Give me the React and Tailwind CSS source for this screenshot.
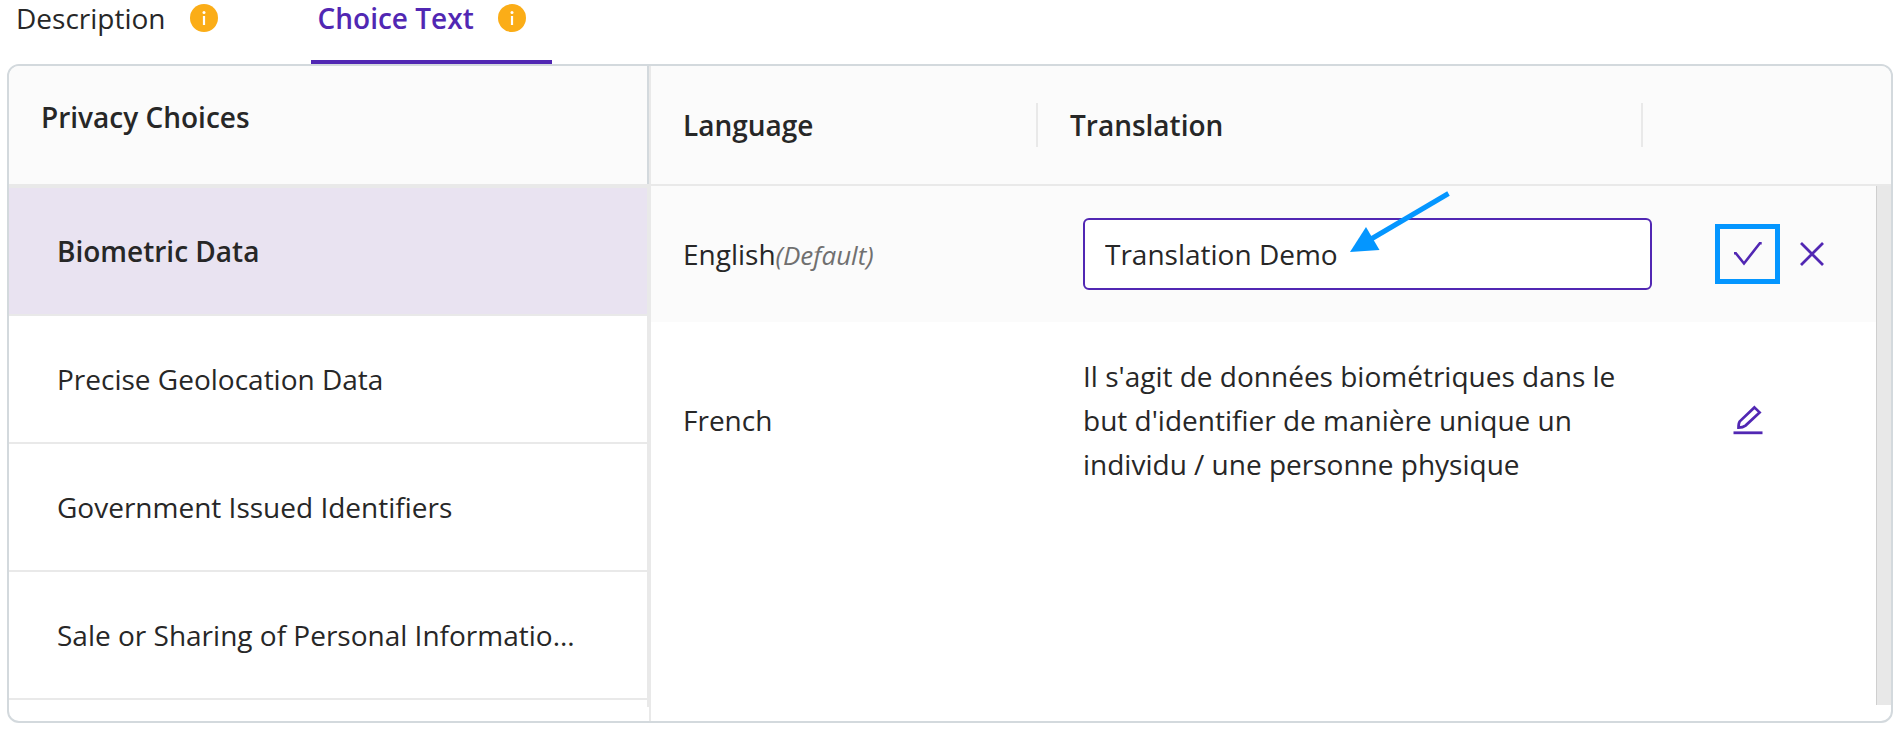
import { useState } from "react";
import clsx from "clsx";

const TABS = ["Description", "Choice Text"];

const CHOICES = [
  "Biometric Data",
  "Precise Geolocation Data",
  "Government Issued Identifiers",
  "Sale or Sharing of Personal Informatio...",
];

const InfoIcon = () => (
  <svg viewBox="0 0 28 28" className="h-7 w-7 shrink-0" aria-hidden="true">
    <circle cx="14" cy="14" r="14" fill="#fbad17" />
    <circle cx="14" cy="8.4" r="1.5" fill="#fff" />
    <path d="M14 12v9" stroke="#fff" strokeWidth="2.2" />
  </svg>
);

const CheckIcon = () => (
  <svg viewBox="0 0 30 26" className="h-[26px] w-[30px]" fill="none" stroke="#5127b3" strokeWidth="2.6" aria-hidden="true">
    <path d="M1 12.2h1.800l8.200 10.300L26.800 2.200h1.900" />
  </svg>
);

const CloseIcon = () => (
  <svg viewBox="0 0 24 24" className="h-6 w-6" fill="none" stroke="#5127b3" strokeWidth="2.8" aria-hidden="true">
    <path d="M1 1l22 22M23 1L1 23" />
  </svg>
);

const EditIcon = () => (
  <svg viewBox="0 0 30 30" className="h-[30px] w-[30px]" fill="none" stroke="#5127b3" strokeWidth="2.7" aria-hidden="true">
    <path d="M21.4 2.400l5.200 5L12.500 20.600c-1.800 1.400-4.200 2-7 2 0-2.800.2-4.900 1.300-6.300L21.400 2.400z" />
    <path d="M0.500 27.800h29" strokeWidth="2.800" />
  </svg>
);

const Arrow = () => (
  <svg viewBox="0 0 104 66" className="pointer-events-none absolute -top-[30px] left-[265px] h-[66px] w-[104px]" aria-hidden="true">
    <path d="M100.500 5.500L24 50.500" stroke="#0496ff" strokeWidth="5" />
    <path d="M2 64l16-25 13.500 23z" fill="#0496ff" />
  </svg>
);

const App = () => {
  const [tab, setTab] = useState("Choice Text");
  const [selected, setSelected] = useState("Biometric Data");
  const [value, setValue] = useState("Translation Demo");

  return (
    <div className="bg-white pr-[5px] pb-[7px] pl-[7px] font-['Open_Sans',sans-serif] text-[28px] leading-[44px] text-[#272727]">
      <div role="tablist" className="flex gap-[67px] pl-[2px]">
        {TABS.map((name) => (
          <button
            key={name}
            role="tab"
            aria-selected={tab === name}
            onClick={() => setTab(name)}
            className={clsx(
              "flex h-16 items-start gap-6 border-b-4 pr-[26px] pl-[7px] leading-9",
              tab === name ? "border-[#5127b3] font-semibold text-[#5127b3]" : "border-transparent"
            )}
          >
            {name}
            <span className="pt-1"><InfoIcon /></span>
          </button>
        ))}
      </div>

      <div className="grid grid-cols-[640px_1fr] overflow-hidden rounded-xl border-2 border-[#d3d9dd]">
        <aside>
          <h2 className="h-[118px] border-r-2 border-[#d3d9dd] bg-[#fbfbfb] pt-[29px] pl-8 font-semibold">
            Privacy Choices
          </h2>
          <ul className="border-t-4 border-r-2 border-[#e9e9e9] pb-[7px]">
            {CHOICES.map((choice) => (
              <li key={choice} className="border-b-2 border-[#e9e9e9]">
                <button
                  onClick={() => setSelected(choice)}
                  className={clsx(
                    "block h-[126px] w-full pl-12 text-left",
                    selected === choice && "bg-[#e9e3f1] font-semibold"
                  )}
                >
                  {choice}
                </button>
              </li>
            ))}
          </ul>
          <div className="h-[14px]" />
        </aside>

        <section className="relative border-l-2 border-[#e9e9e9]">
          <table className="w-full table-fixed border-separate border-spacing-0 text-left">
            <colgroup>
              <col className="w-[387px]" />
              <col />
              <col className="w-[239px]" />
            </colgroup>
            <thead className="bg-[#fbfbfb]">
              <tr className="h-[120px]">
                <th className="border-b-2 border-[#e9e9e9] pl-8 font-semibold">
                  <div className="border-r-2 border-[#e9e9e9]">Language</div>
                </th>
                <th className="border-b-2 border-[#e9e9e9] pr-[9px] pl-8 font-semibold">
                  <div className="border-r-2 border-[#e9e9e9]">Translation</div>
                </th>
                <td className="border-b-2 border-[#e9e9e9]" />
              </tr>
            </thead>
            <tbody>
              <tr className="h-[136px] bg-[#fbfbfb]">
                <td className="pl-8">
                  <label htmlFor="english">
                    English<em className="text-[26px] text-[#707070]">(Default)</em>
                  </label>
                </td>
                <td className="pl-[45px]">
                  <div className="relative">
                    <input
                      id="english"
                      type="text"
                      value={value}
                      onChange={(e) => setValue(e.target.value)}
                      className="block h-[72px] w-full rounded-md border-2 border-[#5127b3] bg-white px-5 outline-none"
                    />
                    <Arrow />
                  </div>
                </td>
                <td className="pl-[63px]">
                  <div className="flex items-center gap-5">
                    <button aria-label="Save" className="flex h-[60px] w-[65px] items-center justify-center border-5 border-[#0496ff]">
                      <CheckIcon />
                    </button>
                    <button aria-label="Cancel"><CloseIcon /></button>
                  </div>
                </td>
              </tr>
              <tr className="h-[196px]">
                <td className="pl-8">French</td>
                <td className="pl-[45px]">
                  Il s'agit de données biométriques dans le but d'identifier de manière unique un individu / une personne physique
                </td>
                <td className="pl-[63px]">
                  <button aria-label="Edit" className="flex w-[65px] justify-center"><EditIcon /></button>
                </td>
              </tr>
            </tbody>
          </table>
          {/* scroll track */}
          <div className="absolute top-[120px] right-0 bottom-4 w-[15px] border-l border-[#cfcfcf] bg-[#e8e8e8]" />
        </section>
      </div>
    </div>
  );
};

export default App;
